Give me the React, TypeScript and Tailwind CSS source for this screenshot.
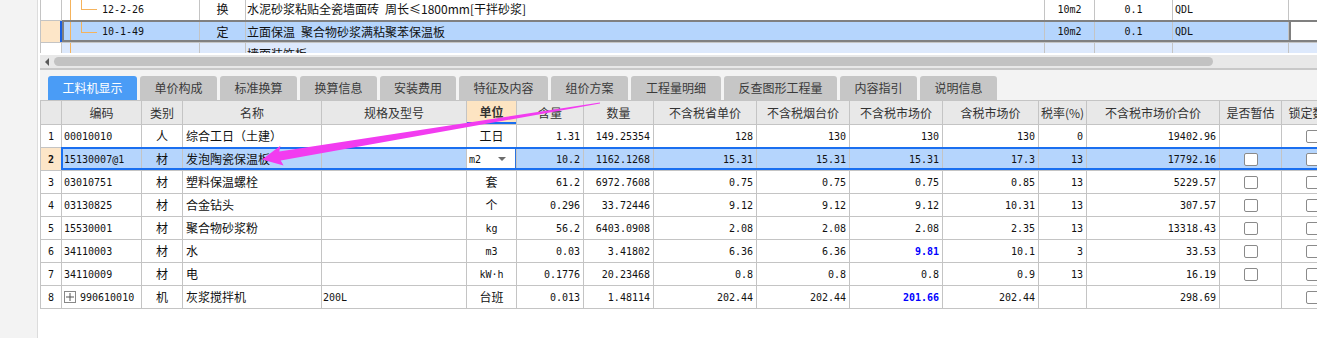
import React from "react";

const MONO = "font-['DejaVu_Sans_Mono',monospace] text-[10px]";
const CJK = "font-['Noto_Sans_CJK_SC',sans-serif] text-[12px]";
const GRID = "border-[#c4c4c4]";

const W = [
  "w-[21px]", "w-[80px]", "w-[41px]", "w-[139px]", "w-[145px]", "w-[50px]", "w-[67px]", "w-[70px]",
  "w-[103px]", "w-[93px]", "w-[93px]", "w-[96px]", "w-[48px]", "w-[133px]", "w-[62px]", "w-[62px]",
];

const headers = [
  "", "编码", "类别", "名称", "规格及型号", "单位", "含量", "数量", "不含税省单价", "不含税烟台价",
  "不含税市场价", "含税市场价", "税率(%)", "不含税市场价合价", "是否暂估", "锁定数量",
];

type R = {
  n: string; code: string; type: string; name: string; spec: string; unit: string; unitCjk: boolean;
  hl: string; qty: string; p1: string; p2: string; p3: string; p3Blue?: boolean; p4: string; tax: string;
  total: string; est: boolean; expand?: boolean; sel?: boolean;
};

const rows: R[] = [
  { n: "1", code: "00010010", type: "人", name: "综合工日（土建）", spec: "", unit: "工日", unitCjk: true, hl: "1.31", qty: "149.25354", p1: "128", p2: "130", p3: "130", p4: "130", tax: "0", total: "19402.96", est: false },
  { n: "2", code: "15130007@1", type: "材", name: "发泡陶瓷保温板", spec: "", unit: "m2", unitCjk: false, hl: "10.2", qty: "1162.1268", p1: "15.31", p2: "15.31", p3: "15.31", p4: "17.3", tax: "13", total: "17792.16", est: true, sel: true },
  { n: "3", code: "03010751", type: "材", name: "塑料保温螺栓", spec: "", unit: "套", unitCjk: true, hl: "61.2", qty: "6972.7608", p1: "0.75", p2: "0.75", p3: "0.75", p4: "0.85", tax: "13", total: "5229.57", est: true },
  { n: "4", code: "03130825", type: "材", name: "合金钻头", spec: "", unit: "个", unitCjk: true, hl: "0.296", qty: "33.72446", p1: "9.12", p2: "9.12", p3: "9.12", p4: "10.31", tax: "13", total: "307.57", est: true },
  { n: "5", code: "15530001", type: "材", name: "聚合物砂浆粉", spec: "", unit: "kg", unitCjk: false, hl: "56.2", qty: "6403.0908", p1: "2.08", p2: "2.08", p3: "2.08", p4: "2.35", tax: "13", total: "13318.43", est: true },
  { n: "6", code: "34110003", type: "材", name: "水", spec: "", unit: "m3", unitCjk: false, hl: "0.03", qty: "3.41802", p1: "6.36", p2: "6.36", p3: "9.81", p3Blue: true, p4: "10.1", tax: "3", total: "33.53", est: true },
  { n: "7", code: "34110009", type: "材", name: "电", spec: "", unit: "kW·h", unitCjk: false, hl: "0.1776", qty: "20.23468", p1: "0.8", p2: "0.8", p3: "0.8", p4: "0.9", tax: "13", total: "16.19", est: true },
  { n: "8", code: "990610010", type: "机", name: "灰浆搅拌机", spec: "200L", unit: "台班", unitCjk: true, hl: "0.013", qty: "1.48114", p1: "202.44", p2: "202.44", p3: "201.66", p3Blue: true, p4: "202.44", tax: "", total: "298.69", est: false, expand: true },
];

function Cell({ w, className = "", children }: { w: string; className?: string; children?: React.ReactNode }) {
  return (
    <div className={`${w} shrink-0 h-full border-r ${GRID} flex items-center overflow-hidden whitespace-nowrap ${className}`}>
      {children}
    </div>
  );
}

function Check() {
  return <span className="block w-[14px] h-[13px] border border-[#8a8a8a] rounded-[2px] bg-white" />;
}

const tabs: [string, string][] = [
  ["工料机显示", "w-[89px]"], ["单价构成", "w-[77px]"], ["标准换算", "w-[77px]"], ["换算信息", "w-[77px]"],
  ["安装费用", "w-[76px]"], ["特征及内容", "w-[89px]"], ["组价方案", "w-[77px]"], ["工程量明细", "w-[90px]"],
  ["反查图形工程量", "w-[113px]"], ["内容指引", "w-[77px]"], ["说明信息", "w-[77px]"],
];

const TW = ["w-[21px]", "w-[138px]", "w-[46px]", "w-[799px]", "w-[50px]", "w-[78px]", "w-[116px]", "w-[60px]"];

function TreeCell({ code, last }: { code: string; last?: boolean }) {
  return (
    <Cell w={TW[1]} className={`relative ${MONO}`}>
      <span className="absolute left-[8px] top-0 bottom-0 w-px bg-[#f5b35c]" />
      {!last && (
        <>
          <span className="absolute left-[19px] top-0 h-1/2 w-px bg-[#f5b35c]" />
          <span className="absolute left-[19px] top-1/2 w-[16px] h-px bg-[#f5b35c]" />
        </>
      )}
      <span className="pl-[40px]">{code}</span>
    </Cell>
  );
}

function TopTable() {
  return (
    <div className={`h-[53px] overflow-hidden border-l ${GRID}`}>
      <div className="-mt-[2px]">
        <div className={`flex h-[23px] border-b ${GRID} bg-white`}>
          <Cell w={TW[0]} />
          <TreeCell code="12-2-26" />
          <Cell w={TW[2]} className={`justify-center ${CJK}`}>换</Cell>
          <Cell w={TW[3]} className={`pl-[1px] ${CJK}`}>水泥砂浆粘贴全瓷墙面砖{"\u2002"}周长≤1800mm[干拌砂浆]</Cell>
          <Cell w={TW[4]} className={`justify-center ${MONO}`}>10m2</Cell>
          <Cell w={TW[5]} className={`justify-center ${MONO}`}>0.1</Cell>
          <Cell w={TW[6]} className={`pl-[2px] ${MONO}`}>QDL</Cell>
          <Cell w={TW[7]} />
        </div>
        <div className={`relative flex h-[22px] border-b ${GRID} bg-[#b5d5fd]`}>
          <Cell w={TW[0]} className="bg-[#fde6c8] border-r-2 border-r-[#1a5fe0]" />
          <TreeCell code="10-1-49" />
          <Cell w={TW[2]} className={`justify-center ${CJK}`}>定</Cell>
          <Cell w={TW[3]} className={`pl-[1px] ${CJK}`}>立面保温{"\u2002"}聚合物砂浆满粘聚苯保温板</Cell>
          <Cell w={TW[4]} className={`justify-center ${MONO}`}>10m2</Cell>
          <Cell w={TW[5]} className={`justify-center ${MONO}`}>0.1</Cell>
          <Cell w={TW[6]} className={`pl-[2px] ${MONO}`}>QDL</Cell>
          <Cell w={TW[7]} className="bg-white" />
          <span className="absolute left-[21px] right-0 -top-px bottom-0 border-y-2 border-[#808080]" />
          <span className="absolute left-[21px] w-[1229px] -top-px bottom-0 border-x-2 border-[#808080]" />
        </div>
        <div className={`flex h-[22px] border-b ${GRID} bg-[#dde9fc]`}>
          <Cell w={TW[0]} className="bg-white" />
          <TreeCell code="" last />
          <Cell w={TW[2]} />
          <Cell w={TW[3]} className={`pl-[1px] ${CJK}`}>墙面装饰板</Cell>
          <Cell w={TW[4]} />
          <Cell w={TW[5]} />
          <Cell w={TW[6]} />
          <Cell w={TW[7]} />
        </div>
      </div>
    </div>
  );
}

function DataRow({ r }: { r: R }) {
  const num = `justify-end pr-[3px] ${MONO}`;
  return (
    <div className={`relative flex h-[23px] border-b ${GRID} ${r.sel ? "bg-[#b5d5fd]" : "bg-white"} text-[#111]`}>
      <Cell w={W[0]} className={`justify-center ${MONO} ${r.sel ? "bg-[#fde6c8] font-bold" : "bg-white"}`}>{r.n}</Cell>
      <Cell w={W[1]} className={`pl-[2px] ${MONO}`}>
        {r.expand && (
          <span className="mr-[4px] w-[12px] h-[12px] border border-[#888] flex items-center justify-center bg-white">
            <svg width="8" height="8" viewBox="0 0 8 8">
              <path d="M0 4H8M4 0V8" stroke="#555" strokeWidth="1" />
            </svg>
          </span>
        )}
        {r.code}
      </Cell>
      <Cell w={W[2]} className={`justify-center ${CJK}`}>{r.type}</Cell>
      <Cell w={W[3]} className={`pl-[3px] ${CJK}`}>{r.name}</Cell>
      <Cell w={W[4]} className={`pl-[1px] ${MONO}`}>{r.spec}</Cell>
      {r.sel ? (
        <Cell w={W[5]} className="relative">
          <div className="absolute -left-px top-0 bottom-0 right-0 bg-white border-x border-[#2a73e0] flex items-center justify-between pl-[2px] pr-[9px]">
            <span className={MONO}>m2</span>
            <svg width="8" height="4" viewBox="0 0 8 4">
              <polygon points="0,0 8,0 4,4" fill="#6c6c6c" />
            </svg>
          </div>
        </Cell>
      ) : (
        <Cell w={W[5]} className={`justify-center ${r.unitCjk ? CJK : MONO}`}>{r.unit}</Cell>
      )}
      <Cell w={W[6]} className={num}>{r.hl}</Cell>
      <Cell w={W[7]} className={num}>{r.qty}</Cell>
      <Cell w={W[8]} className={num}>{r.p1}</Cell>
      <Cell w={W[9]} className={num}>{r.p2}</Cell>
      <Cell w={W[10]} className={`${num} ${r.p3Blue ? "text-[#0000ff] font-bold" : ""}`}>{r.p3}</Cell>
      <Cell w={W[11]} className={num}>{r.p4}</Cell>
      <Cell w={W[12]} className={num}>{r.tax}</Cell>
      <Cell w={W[13]} className={num}>{r.total}</Cell>
      <Cell w={W[14]} className="justify-center">{r.est && <Check />}</Cell>
      <Cell w={W[15]} className="justify-center"><Check /></Cell>
      {r.sel && <span className="absolute left-[20px] right-0 -top-px bottom-0 border-y-2 border-l-2 border-[#1a6ff0]" />}
    </div>
  );
}

export default function App() {
  return (
    <div className={`relative w-[1317px] h-[338px] overflow-hidden bg-white flex ${CJK} text-[#111]`}>
      <div className="w-[38px] shrink-0 h-full bg-[#f3f3f3] border-r border-[#dcdcdc]" />
      <div className="flex-1 h-full overflow-hidden pl-[2px] flex flex-col">
        <TopTable />
        <div className="h-[2px] bg-white shrink-0" />
        <div className="h-[13px] shrink-0 bg-[#e8e8e8] flex items-center pl-[5px]">
          <svg width="4" height="8" viewBox="0 0 4 8">
            <polygon points="4,0 0,4 4,8" fill="#5a5a5a" />
          </svg>
          <div className="ml-[5px] w-[1159px] h-[9px] rounded-full bg-[#c2c2c2]" />
        </div>
        <div className="h-[2px] shrink-0 bg-[#c8c8c8]" />
        <div className="h-[30px] shrink-0 bg-[#f3f3f3] flex items-end pl-[8px] gap-[3px]">
          {tabs.map(([t, w], i) => (
            <div
              key={t}
              className={`${w} h-[24px] rounded-t-[3px] flex items-center justify-center ${
                i === 0 ? "bg-[#4a9cf6] text-white" : "bg-[#c6c6c6] text-[#3a3a3a]"
              }`}
            >
              {t}
            </div>
          ))}
        </div>
        <div className={`border-t border-l ${GRID} w-[1400px]`}>
          <div className={`flex h-[24px] border-b ${GRID} bg-[#e8e8e8] text-[#333]`}>
            {headers.map((h, i) =>
              i === 5 ? (
                <Cell key={i} w={W[i]} className="bg-[#fde4c2]">
                  <div className="w-full h-full flex items-center justify-center font-bold border-b-2 border-[#1a6ff0]">{h}</div>
                </Cell>
              ) : (
                <Cell key={i} w={W[i]} className="justify-center">{h}</Cell>
              )
            )}
          </div>
          {rows.map((r) => (
            <DataRow key={r.n} r={r} />
          ))}
        </div>
      </div>
      <svg className="absolute left-0 top-0 pointer-events-none" width="1317" height="338" viewBox="0 0 1317 338">
        <polygon
          points="600,102.4 279.3,151.6 280.4,145.8 262,159.5 283.6,165.5 280.7,160.4 600,103.6"
          fill="#f23cf0"
        />
      </svg>
    </div>
  );
}
